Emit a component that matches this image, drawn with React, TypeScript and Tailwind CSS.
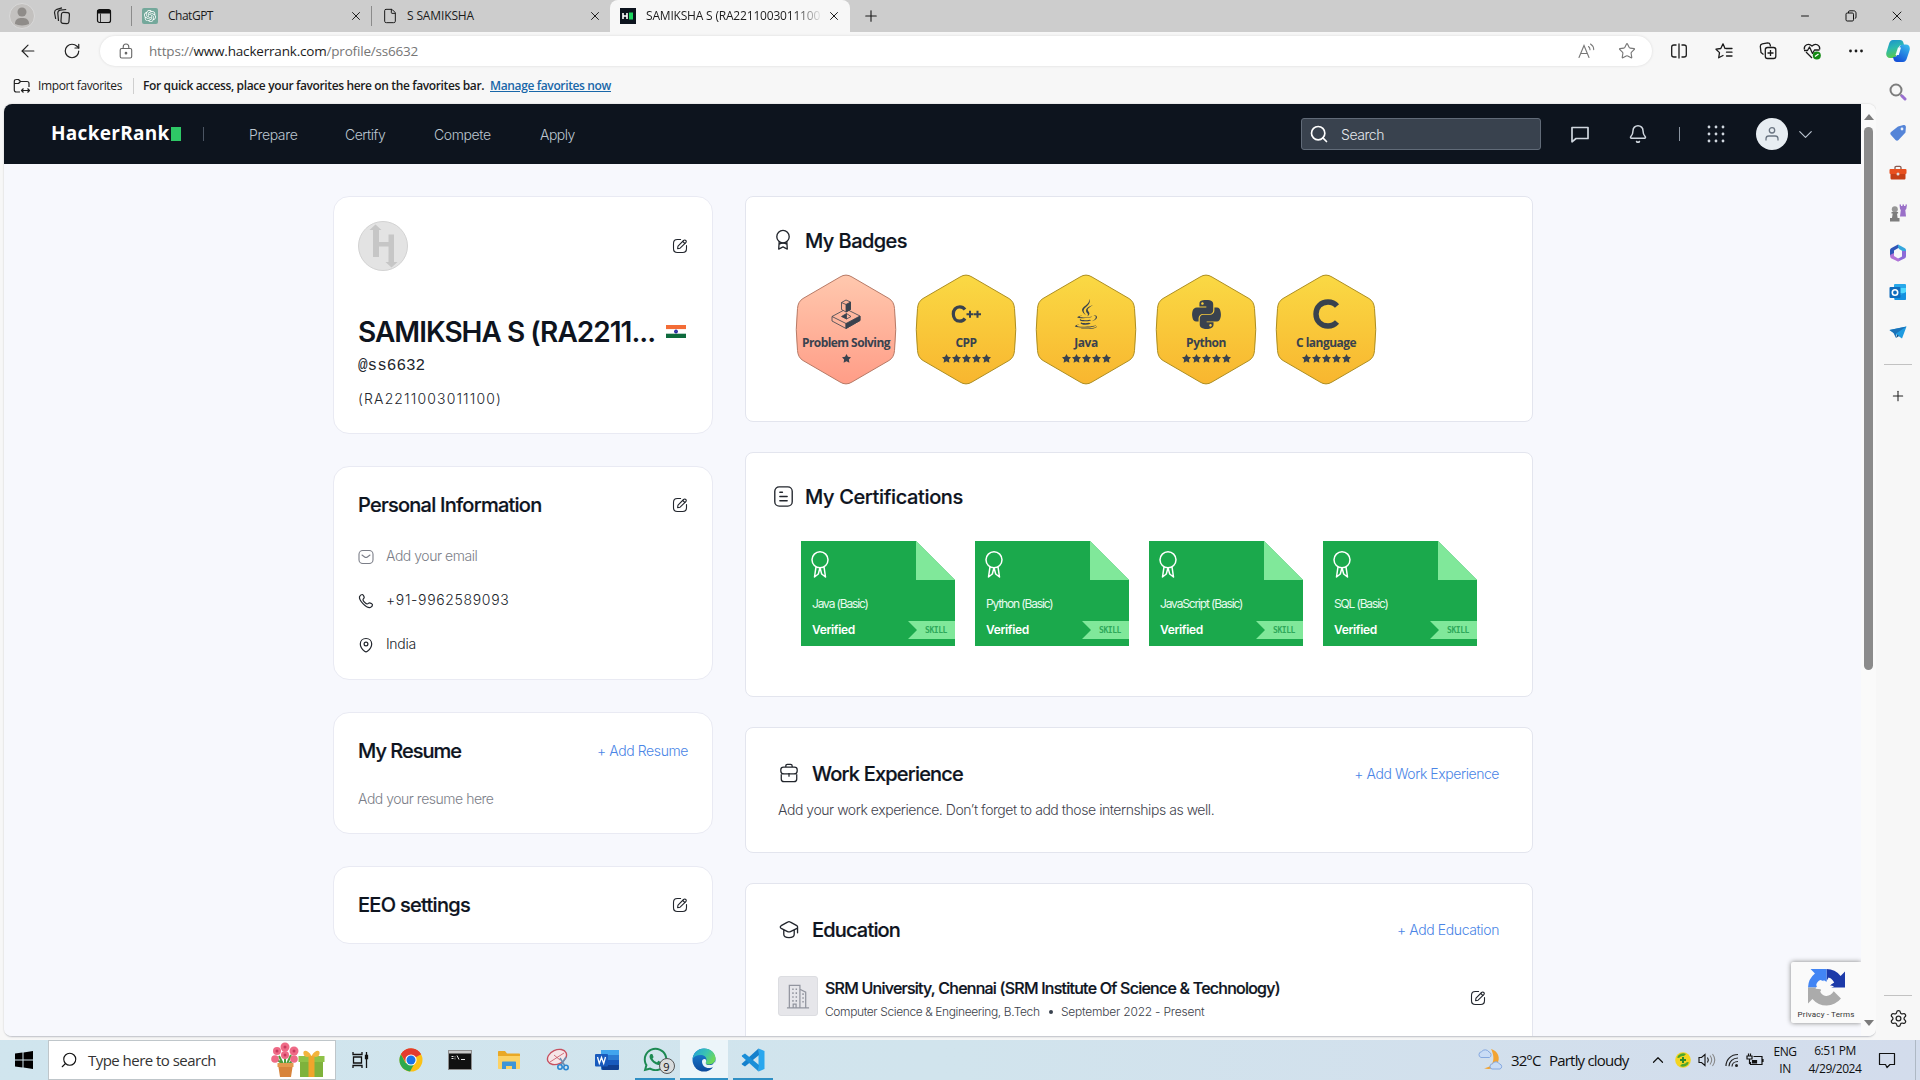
import React from "react";
import {
  ArrowLeft, RotateCw, X, Plus, Minus, File, Search, Bell, ChevronDown, ChevronUp, Star, Settings,
} from "lucide-react";
import { FaPython, FaJava, FaWhatsapp } from "react-icons/fa";
import { SiOpenai } from "react-icons/si";

type P = { className?: string };

/* ---------- shared icons ---------- */

const EditIcon = () => (
  <svg viewBox="0 0 16 16" className="size-4 shrink-0" fill="none" stroke="#22262d" strokeWidth="1.1" strokeLinecap="round" strokeLinejoin="round">
    <path d="M8.6 1.5H5.4C2.6 1.5 1.5 2.6 1.5 5.4v5.2c0 2.8 1.1 3.9 3.9 3.9h5.2c2.8 0 3.9-1.1 3.9-3.9V7.6" />
    <path d="M5.6 10.6 6 8.2l5.6-5.7c.7-.7 1.6-.6 2.2 0 .6.6.7 1.4 0 2.1L8.1 10.2 5.6 10.6Z" />
    <path d="m10.7 3.4 2.1 2.1" />
  </svg>
);

const MedalIcon = ({ className }: P) => (
  <svg viewBox="0 0 18 22" className={className} fill="none" stroke="currentColor" strokeWidth="1.4" strokeLinejoin="round">
    <circle cx="9" cy="8" r="6.5" />
    <path d="M5 13.4 4.5 21 9 18.8l4.5 2.2-.5-7.6M5 15.8c2.5-1.2 5.5-1.2 8 0" />
  </svg>
);

const CertMedal = () => (
  <svg viewBox="0 0 18 27" className="h-[27px] w-[18px]" fill="none" stroke="#fff" strokeWidth="1.5" strokeLinejoin="round">
    <ellipse cx="9" cy="8.8" rx="8" ry="8" />
    <path d="M5 15.8 3.5 26l3.8-3L9 16.8 10.7 23l3.8 3L13 15.8" />
  </svg>
);

/* ---------- browser chrome ---------- */

function TabStrip() {
  return (
    <div className="flex h-8 shrink-0 items-center bg-[#cdcdcd] text-[12px] text-[#1b1b1b]">
      <div className="ml-[9px] grid size-[26px] place-items-center rounded-full border border-[#d9d9d9] bg-[#c3c1bf]">
        <svg viewBox="0 0 20 20" className="size-5"><circle cx="10" cy="6" r="4.5" fill="#8f8c89" /><path d="M3 18c0-5 3-6 7-6s7 1 7 6a9 4 0 0 1-14 0Z" fill="#8f8c89" /></svg>
      </div>
      <svg viewBox="0 0 18 18" className="ml-[18px] size-[18px]" fill="none" stroke="#222" strokeWidth="1.2" strokeLinejoin="round">
        <rect x="8.2" y="5.5" width="8" height="11" rx="2" transform="rotate(4 12 11)" /><path d="M5.5 14 4.8 6c0-1.8.7-2.6 2.400-2.900l6-.6M2.700 12 1.500 5.500C1.500 3.700 2.300 2.900 3.900 2.300L9 .8" />
      </svg>
      <svg viewBox="0 0 16 16" className="ml-[25px] size-4" fill="none" stroke="#111" strokeWidth="1.2"><rect x="1.5" y="1.5" width="13" height="13" rx="2" /><path d="M2 2.500h12v2.500H2Z" fill="#111" /><path d="M4.500 5.500V14" strokeWidth=".8" /></svg>
      <div className="ml-[19px] h-5 w-px bg-[#8b8b8b]" />
      <div className="flex w-[239px] items-center">
        <div className="ml-[10px] grid size-4 place-items-center rounded-[2px] bg-[#74a89b] text-white"><SiOpenai className="size-3" /></div>
        <span className="ml-[10px] tracking-[-0.49px]">ChatGPT</span>
        <X className="ml-auto mr-[8px] size-3.5" strokeWidth={1.7} />
      </div>
      <div className="h-5 w-px bg-[#8b8b8b]" />
      <div className="flex w-[238px] items-center">
        <File className="ml-[10px] size-4" strokeWidth={1.5} />
        <span className="ml-[9px] tracking-[-0.14px]">S SAMIKSHA</span>
        <X className="ml-auto mr-[8px] size-3.5" strokeWidth={1.7} />
      </div>
      <div className="flex h-8 w-[240px] items-center rounded-t-lg bg-[#f7f7f7]">
        <svg viewBox="0 0 16 16" className="ml-[10px] size-4"><rect width="16" height="16" fill="#0d141e" /><path d="M3 5v6M7 5v6M3 8h4" stroke="#fff" strokeWidth="1.6" /><rect x="9" y="4.5" width="4" height="7" fill="#1ed760" /></svg>
        <span className="ml-[10px] w-[174px] overflow-hidden whitespace-nowrap bg-linear-to-r from-[#1b1b1b] from-85% to-[#1b1b1b]/10 bg-clip-text tracking-[-0.19px] text-transparent">SAMIKSHA S (RA2211003011100</span>
        <X className="ml-[7px] size-3.5" strokeWidth={1.7} />
      </div>
      <Plus className="ml-[12px] size-[18px]" strokeWidth={1.5} />
      <div className="ml-auto flex items-center">
        <Minus className="size-3" strokeWidth={2} />
        <svg viewBox="0 0 12 12" className="ml-[34px] size-3" fill="none" stroke="#111" strokeWidth="1"><rect x="1" y="3" width="7.5" height="8" rx="1.2" /><path d="M3.500 3V2c0-.8.4-1.200 1.200-1.200h4c1.300 0 2.300 1 2.300 2.300v4c0 .8-.4 1.400-1.200 1.400" /></svg>
        <X className="ml-[32px] mr-[15px] size-4" strokeWidth={1.5} />
      </div>
    </div>
  );
}

const CopilotIcon = () => (
  <svg viewBox="0 0 24 24" className="size-6">
    <defs>
      <linearGradient id="cpA" x1="0" y1="0" x2=".3" y2="1"><stop offset="0" stopColor="#1a8fd0" /><stop offset=".5" stopColor="#2bb9b0" /><stop offset="1" stopColor="#58c94f" /></linearGradient>
      <linearGradient id="cpB" x1="1" y1="0" x2=".4" y2="1"><stop offset="0" stopColor="#39c3ee" /><stop offset="1" stopColor="#1552d8" /></linearGradient>
    </defs>
    <path d="M7 1h7c2 0 3 1 3.500 3L18 6h-2c-2 0-3 1-3.500 3l-2 7c-.6 2-1.500 3-3.500 3H4c-3 0-4.500-2.500-3.500-6L3 5c.8-2.700 2-4 4-4Z" fill="url(#cpA)" />
    <path d="M17 23h-6c-2 0-3-1-3.500-3L7 18h1c2 0 3-1 3.500-3l2-6.500c.6-2 1.500-3 3.500-3h3c3 0 4.500 2.500 3.500 6L21 19c-.8 2.700-2 4-4 4Z" fill="url(#cpB)" />
    <path d="M12 8.500h3l-2.200 7.500H9.500Z" fill="#f5fbff" />
  </svg>
);

function Toolbar() {
  return (
    <div className="flex h-10 shrink-0 items-center bg-[#f7f7f7] pb-[2px]">
      <ArrowLeft className="ml-[18px] size-5 text-[#222]" strokeWidth={1.4} />
      <RotateCw className="ml-[25px] size-[18px] text-[#222]" strokeWidth={1.6} />
      <div className="ml-[19px] flex h-[30px] w-[1552px] items-center rounded-full bg-white shadow-[0_0_3px_rgba(0,0,0,0.12)]">
        <svg viewBox="0 0 16 16" className="ml-[18px] size-4" fill="none" stroke="#666" strokeWidth="1.1"><rect x="2.2" y="5.5" width="11.5" height="9.5" rx="1.5" /><path d="M5.200 5.500V4C5.200 2 6.300 1 8 1s2.800 1 2.800 3v1.500" /><circle cx="8" cy="10.2" r=".8" fill="#666" /></svg>
        <span className="ml-[15px] text-[13.5px] tracking-[-0.19px] text-[#767676]">https://<span className="text-[#1b1b1b]">www.hackerrank.com</span>/profile/ss6632</span>
        <svg viewBox="0 0 18 16" className="ml-auto mr-[22px] h-4 w-[18px]" fill="none" stroke="#777" strokeWidth="1.1" strokeLinecap="round"><path d="M1 14.500 6 2.500l5 12M2.800 10.500h6.400M10.500 3.500c1 .8 1.500 2 1.500 3.300M12.500 1c2 1.200 3.200 3.200 3.200 5.600" /></svg>
        <Star className="mr-[16px] size-[18px] text-[#777]" strokeWidth={1.5} />
      </div>
      <svg viewBox="0 0 18 16" className="ml-[18px] h-4 w-[18px]" fill="none" stroke="#1b1b1b" strokeWidth="1.3"><path d="M6.500 2H4C2.300 2 1.700 2.600 1.700 4v8c0 1.400.6 2 2.300 2h2.500M11.500 2H14c1.700 0 2.300.6 2.300 2v8c0 1.400-.6 2-2.300 2h-2.500M9 .5v15" /></svg>
      <svg viewBox="0 0 18 18" className="ml-[27px] size-[18px]" fill="none" stroke="#1b1b1b" strokeWidth="1.3" strokeLinejoin="round" strokeLinecap="round"><path d="M10 6.500 8 1.800 5.800 6.500 1 7.200l3.500 3.400-.8 5.200L8 13.500M11 6.500h6M11.500 10.200H17M11.500 14H17" /></svg>
      <svg viewBox="0 0 18 18" className="ml-[26px] size-[18px]" fill="none" stroke="#1b1b1b" strokeWidth="1.3" strokeLinejoin="round"><path d="M4.500 12.500 2 10.500 1.300 4.300c0-1.400.6-2.200 2-2.500l5.400-.9c1.400 0 2.200.5 2.500 1.900l.3 1.700" /><rect x="6.3" y="5.5" width="10.5" height="11" rx="2.2" /><path d="M11.500 8v6M8.500 11h6" /></svg>
      <svg viewBox="0 0 18 18" className="ml-[26px] size-[18px]" fill="none" stroke="#1b1b1b" strokeWidth="1.3" strokeLinejoin="round"><path d="M1.300 7.500C.8 3 5.500.5 9 4c3.500-3.500 8.200-1 7.700 3.500M3 10l6 6" /><path d="M1 8.500h3.500L6.500 5l3 6.500L11.500 8h5" /><circle cx="13.800" cy="13.5" r="4" fill="#138a13" stroke="none" /><path d="m12 14.500 3.500-2.500" stroke="#fff" /></svg>
      <svg viewBox="0 0 18 4" className="ml-[26px] h-1 w-[18px]"><circle cx="3.5" cy="2" r="1.4" fill="#1b1b1b" /><circle cx="9" cy="2" r="1.4" fill="#1b1b1b" /><circle cx="14.5" cy="2" r="1.4" fill="#1b1b1b" /></svg>
      <div className="ml-auto mr-[10px]"><CopilotIcon /></div>
    </div>
  );
}

function FavoritesBar() {
  return (
    <div className="flex h-8 shrink-0 items-center bg-[#f7f7f7] pb-[5px] text-[12px] text-[#1b1b1b]">
      <svg viewBox="0 0 18 16" className="ml-[13px] h-4 w-[18px]" fill="none" stroke="#222" strokeWidth="1.2" strokeLinejoin="round"><path d="M7 14H3.500C2 14 1.300 13.300 1.300 12V3.500c0-1.300.7-2 2.200-2h2L7.500 3.500H14c1.400 0 2 .6 2 2V9M1.500 5.500h4l2-2M8.500 12.500h8M10.500 10.500l-2 2 2 2M14.500 10.500l2 2-2 2" /></svg>
      <span className="ml-[7px] w-[84px] whitespace-nowrap tracking-[-0.37px]">Import favorites</span>
      <div className="ml-[11px] h-4 w-px bg-[#cfcfcf]" />
      <span className="ml-[9px] w-[341px] whitespace-nowrap font-semibold tracking-[-0.37px]">For quick access, place your favorites here on the favorites bar.</span>
      <span className="ml-[6px] whitespace-nowrap font-semibold tracking-[-0.36px] text-[#1967a9] underline">Manage favorites now</span>
    </div>
  );
}

const cell = "grid h-10 w-full place-items-center";

function EdgeSidebar() {
  return (
    <div className="flex w-11 shrink-0 flex-col items-center bg-[#f7f7f7]">
      <div className={cell}><svg viewBox="0 0 18 18" className="size-[18px]" fill="none"><circle cx="7" cy="7" r="5.5" stroke="#7d7d7d" strokeWidth="2" /><path d="m11.500 11.500 2 2" stroke="#8a8290" strokeWidth="2" /><path d="m13 13 3 3" stroke="#9a6fd0" strokeWidth="3" strokeLinecap="round" /></svg></div>
      <div className={cell}><svg viewBox="0 0 18 18" className="mt-px size-[18px]"><path d="M9 2.500 14.500 1c1.500 0 2.300.6 2.400 2l-.4 5.500L9.500 16c-1 1-2 1-3 0L2 11c-.9-1-.9-2 0-3Z" fill="#5585d8" /><circle cx="13" cy="5" r="1.4" fill="#e9f0fb" /></svg></div>
      <div className={cell}><svg viewBox="0 0 18 18" className="mt-[2px] size-[18px]"><path d="M6 5V3.500C6 2.700 6.400 2.300 7.200 2.300h3.600c.8 0 1.200.4 1.200 1.200V5" fill="none" stroke="#8a5a50" strokeWidth="1.3" /><rect x=".5" y="5" width="17" height="5" rx="1" fill="#e8501f" /><path d="M1.500 10h15v4c0 1-.5 1.500-1.500 1.500H3c-1 0-1.500-.5-1.500-1.500Z" fill="#c53f16" /><circle cx="9" cy="10" r="1.5" fill="#ddd" /></svg></div>
      <div className={cell}><svg viewBox="0 0 18 18" className="mt-px size-[18px]"><path d="M10.500.5H12v1.500h1.500V.5H15v1.500h1.500V.5H18l-.7 4.500-1 1 .7 6.500h-6l.8-6.500-.8-1Z" fill="#9a70c8" /><circle cx="5.800" cy="5.2" r="3" fill="#969696" /><path d="M2.500 8h6.600v1.500H8l.6 4.500h1.900v3.500H1V14h2l.7-4.500H2.500Z" fill="#7d7d7d" /></svg></div>
      <div className={cell}><svg viewBox="0 0 18 18" className="mt-px size-[18px]"><path d="M9 .5 2.500 4C1.500 4.600 1 5.500 1 6.500V12l4-2V6.500L11 3Z" fill="#2f55b8" /><path d="m9 .5 6.500 3.500c1 .6 1.500 1.500 1.500 2.500V9L10 5 9 3Z" fill="#35a7dd" /><path d="M17 7v5c0 1-.5 1.900-1.500 2.500L9 17.500l-2-1.700 6-3.300V7Z" fill="#8b6bd8" /><path d="M1 11c0 2 .5 3 1.500 3.500L9 17.500l2.500-1.500L5 12V9Z" fill="#b273d6" /></svg></div>
      <div className={cell}><svg viewBox="0 0 18 18" className="size-[18px]"><rect x="5" y="1" width="12" height="15" rx="1" fill="#28a8ea" /><path d="M11 5h6v5h-6Z" fill="#50d9ff" /><path d="M5 16 17 9v7c0 .6-.4 1-1 1H6Z" fill="#1490df" /><rect x=".5" y="4" width="11" height="11" rx="1" fill="#0f6cbd" /><circle cx="6" cy="9.5" r="2.7" fill="none" stroke="#fff" strokeWidth="1.6" /></svg></div>
      <div className={cell}><svg viewBox="0 0 18 18" className="size-[18px]"><path d="m.5 7 17-3.500-4.500 12-5-3.500Z" fill="#1f9be0" /><path d="m.5 7 17-3.500L7 10.500V15L4.500 10Z" fill="#1b72b8" /><path d="m7 15 3-2-2-1.500Z" fill="#0d4f88" /></svg></div>
      <div className="mt-[12px] h-px w-7 bg-[#c2c2c2]" />
      <Plus className="mt-[23px] size-4 text-[#222]" strokeWidth={1.6} />
      <div className="mt-auto h-px w-7 bg-[#c2c2c2]" />
      <Settings className="mb-[12px] mt-[13px] size-[19px] text-[#222]" strokeWidth={1.6} />
    </div>
  );
}

/* ---------- site header ---------- */

function SiteHeader() {
  return (
    <header className="flex h-[60px] shrink-0 items-center bg-[#0d141e] text-[14px] text-[#bcc6d1]">
      <div className="ml-[47px] flex w-[152px] items-center">
        <span className="mt-[-2px] w-[120px] font-[Open_Sans] text-[19px] font-bold leading-none tracking-[0.3px] text-white">HackerRank</span>
        <span className="h-[14px] w-[10px] bg-[#2ec866]" />
      </div>
      <div className="h-[14px] w-px bg-[#4b5563]" />
      <nav className="ml-[45px] flex">
        <span className="w-[96px] tracking-[-0.35px]">Prepare</span>
        <span className="w-[89px] tracking-[-0.48px]">Certify</span>
        <span className="w-[106px] tracking-[-0.38px]">Compete</span>
        <span className="tracking-[-0.55px]">Apply</span>
      </nav>
      <div className="ml-auto flex h-8 w-[240px] items-center rounded-[3px] border border-[#616b78] bg-[#39424e]">
        <Search className="ml-[7px] size-5 text-white" strokeWidth={2} />
        <span className="ml-[12px] tracking-[-0.45px] text-[#e3e7ec]">Search</span>
      </div>
      <div className="grid w-[78px] place-items-center">
        <svg viewBox="0 0 20 20" className="size-5" fill="none" stroke="#cfd6de" strokeWidth="1.7" strokeLinejoin="round"><path d="M2 3.500h16v11H6L2 17.800Z" /></svg>
      </div>
      <div className="grid w-[38px] place-items-center"><Bell className="size-5 text-[#cfd6de]" strokeWidth={1.8} /></div>
      <div className="grid w-[45px] place-items-center"><div className="h-[14px] w-px bg-[#8b95a1]" /></div>
      <svg viewBox="0 0 18 18" className="mx-[5px] size-[18px]" fill="#cfd6de">
        {[2, 9, 16].map((y) => [2, 9, 16].map((x) => <circle key={`${x}-${y}`} cx={x} cy={y} r="1.4" />))}
      </svg>
      <div className="ml-[26px] grid size-8 place-items-center rounded-full bg-[#e7edf2]">
        <svg viewBox="0 0 16 16" className="size-4" fill="none" stroke="#6b7683" strokeWidth="1.3"><circle cx="8" cy="4.3" r="2.7" /><path d="M2 14.500v-1.700C2 11 3 10 4.800 10h6.400c1.800 0 2.800 1 2.800 2.800v1.700" /></svg>
      </div>
      <ChevronDown className="ml-[6px] mr-[44px] size-[23px] text-[#bcc6d1]" strokeWidth={1.2} />
    </header>
  );
}

/* ---------- left column ---------- */

const leftCard = "flex w-[380px] flex-col rounded-2xl border border-[#e9eaf3] bg-white pl-[24px] pr-[24px]";
const h2 = "text-[20px] font-medium leading-6 text-[#0e141e] [-webkit-text-stroke:0.2px_#0e141e]";
const link = "text-[14px] leading-5 text-[#4a85e6]";

function ProfileCard() {
  return (
    <section className={`${leftCard} h-[238px]`}>
      <div className="mt-[24px] flex h-[50px] items-center justify-between">
        <svg viewBox="0 0 50 50" className="size-[50px]"><circle cx="25" cy="25" r="24.5" fill="#e3e3e3" stroke="#d2d2d2" /><path d="M11.500 9 17.500 3.500 23.500 9H21v12h9.500v-7.500H36V41h3.500l-6 5.500-6-5.500h3V25.500H21V36h-6V9Z" fill="#c6c6c6" /></svg>
        <EditIcon />
      </div>
      <div className="mt-[43px] flex h-[36px] items-center justify-between">
        <h1 className="whitespace-nowrap text-[28px] font-semibold leading-9 tracking-[-0.98px] text-[#0e141e]">SAMIKSHA S (RA2211...</h1>
        <svg viewBox="0 0 20 13" className="mb-[1px] mr-[2px] h-[13px] w-5"><rect width="20" height="4.300" fill="#f36c36" /><rect y="4.300" width="20" height="4.400" fill="#fff" /><rect y="8.700" width="20" height="4.300" fill="#0e6b3d" /><circle cx="10" cy="6.500" r="1.5" fill="#3c3fa8" stroke="#1a1a9c" /></svg>
      </div>
      <p className="mt-[4px] font-[Liberation_Mono] text-[16px] font-normal leading-6 text-[#22262d]">@ss6632</p>
      <p className="mt-[11px] text-[14px] leading-5 tracking-[1.15px] text-[#22262d]">(RA2211003011100)</p>
    </section>
  );
}

function PersonalCard() {
  return (
    <section className={`${leftCard} h-[214px]`}>
      <div className="mt-[26px] flex h-6 items-center justify-between"><h2 className={`${h2} tracking-[-0.75px]`}>Personal Information</h2><EditIcon /></div>
      <div className="mt-[28px] flex h-5 items-center text-[14px] text-[#7b7e88]">
        <svg viewBox="0 0 16 16" className="mt-[4px] size-4" fill="none" stroke="currentColor" strokeWidth="1.1" strokeLinecap="round"><rect x="1" y="1.5" width="14" height="13" rx="3.8" /><path d="m4 6 2.600 2c.9.700 1.900.7 2.800 0L12 6" /></svg>
        <span className="ml-[12px] tracking-[-0.46px]">Add your email</span>
      </div>
      <div className="mt-[24px] flex h-5 items-center text-[14px] text-[#22262d]">
        <svg viewBox="0 0 16 16" className="mt-[4px] size-4" fill="none" stroke="currentColor" strokeWidth="1.2" strokeLinejoin="round"><path d="M1.500 3.700C2 2.400 3 1.500 4.200 1.500c.8 0 2 2 2 3 0 1-1.200 1.300-1.200 2.200 0 1.300 3 4.300 4.300 4.300.9 0 1.200-1.200 2.200-1.200s3 1.200 3 2c0 1.200-.9 2.200-2.200 2.700C8.500 15.300 0.700 7.500 1.500 3.700Z" /></svg>
        <span className="ml-[12px] tracking-[0.66px]">+91-9962589093</span>
      </div>
      <div className="mt-[24px] flex h-5 items-center text-[14px] text-[#22262d]">
        <svg viewBox="0 0 16 16" className="mt-[4px] size-4" fill="none" stroke="currentColor" strokeWidth="1.2"><path d="M8 1.500c3.500 0 5.700 2.500 5.700 5.600 0 2.900-2 5.500-4.300 7.200-.9.600-1.900.6-2.800 0C4.300 12.600 2.300 10 2.300 7.100 2.300 4 4.500 1.500 8 1.500Z" /><circle cx="8" cy="7" r="1.9" /></svg>
        <span className="ml-[12px] tracking-[-0.3px]">India</span>
      </div>
    </section>
  );
}

function ResumeCard() {
  return (
    <section className={`${leftCard} h-[122px]`}>
      <div className="mt-[26px] flex h-6 items-center justify-between"><h2 className={`${h2} tracking-[-1px]`}>My Resume</h2><span className={`${link} tracking-[-0.4px]`}>+ Add Resume</span></div>
      <p className="mt-[26px] text-[14px] leading-5 tracking-[-0.48px] text-[#7b7e88]">Add your resume here</p>
    </section>
  );
}

function EeoCard() {
  return (
    <section className={`${leftCard} h-[78px]`}>
      <div className="mt-[26px] flex h-6 items-center justify-between"><h2 className={`${h2} tracking-[-0.72px]`}>EEO settings</h2><EditIcon /></div>
    </section>
  );
}

/* ---------- right column ---------- */

const rightCard = "flex w-[788px] flex-col rounded-lg border border-[#e3e5ee] bg-white";
const STAR = "M4 0 5.300 2.500 8 2.900 6.100 4.900l.5 2.900L4 6.500 1.400 7.800l.5-2.900L0 2.900l2.700-.4Z";

function Badge({ name, stars, bronze, children, track }: { name: string; stars: number; bronze?: boolean; children: React.ReactNode; track: string }) {
  const id = bronze ? "bronze" : "gold";
  return (
    <div className="relative h-[111px] w-[102px]">
      <svg viewBox="-1 -.5 102 111" className="absolute inset-0 h-full w-full">
        <defs>
          <linearGradient id="gold" x1="0" y1="0" x2="0" y2="1"><stop offset="0" stopColor="#fad944" /><stop offset="1" stopColor="#f8b62f" /></linearGradient>
          <linearGradient id="bronze" x1="0" y1="0" x2="0" y2="1"><stop offset="0" stopColor="#ffc8ae" /><stop offset="1" stopColor="#ff9d87" /></linearGradient>
        </defs>
        <path d="M44 2.500Q50-1.300 56 2.500L93 24Q98 27 98.500 34Q101 55 98.500 76Q98 83 93 86L56 107.500Q50 111.300 44 107.500L7 86Q2 83 1.500 76Q-1 55 1.500 34Q2 27 7 24Z" fill={`url(#${id})`} stroke={bronze ? "#b77a66" : "#ad8e22"} strokeWidth="1" />
      </svg>
      <div className="relative flex h-full flex-col items-center text-[#39424e]">
        <div className="mt-[23px] grid h-[34px] place-items-center">{children}</div>
        <span className={`mt-[3px] whitespace-nowrap font-[Open_Sans] text-[12px] font-bold leading-[18px] ${track}`}>{name}</span>
        <div className="mt-[2px] flex gap-px">
          {Array.from({ length: stars }, (_, i) => <svg key={i} viewBox="0 0 8 8" className="size-[9px]" fill="#39424e"><path d={STAR} /></svg>)}
        </div>
      </div>
    </div>
  );
}

function BadgesCard() {
  return (
    <section className={`${rightCard} h-[226px]`}>
      <div className="ml-[28px] mt-[32px] flex h-6 items-center">
        <MedalIcon className="mb-[4px] h-[21px] w-[18px] text-[#22262d]" />
        <h2 className={`${h2} ml-[13px] tracking-[-0.55px]`}>My Badges</h2>
      </div>
      <div className="ml-[49px] mt-[21px] flex gap-[18px]">
        <Badge name="Problem Solving" stars={1} bronze track="tracking-[-0.57px]">
          <svg viewBox="0 0 30 30" className="size-[30px]" fill="none" stroke="#39424e" strokeWidth=".8" strokeLinejoin="round"><path d="M1 17.500 15 10l14 7v4.500L15 29.500 1 22Z" /><path d="M15 24.500 29 17v4.500L15 29.500Z" fill="#39424e" /><path d="M1 17.500 15 24.500V29" /><path d="M10.500 3.500 15 1l4.500 2v7.500L15 13l-4.500-2.500Z" fill="#ffb69c" /><path d="M10.500 3.500 15 5.500" /><path d="M15 5.500 19.500 3v7.500L15 13Z" fill="#39424e" /><path d="m10.500 17.500 5-3v5.500Z" fill="#39424e" /><path d="m15.500 14.500 4.500 3-4.500 2.500" /></svg>
        </Badge>
        <Badge name="CPP" stars={5} track="tracking-[-0.5px]">
          <svg viewBox="0 0 30 20" className="h-5 w-[30px]" fill="none" stroke="#39424e"><path d="M14 5.500C12.700 3.700 11 2.800 8.800 2.800 4.800 2.800 2.300 5.800 2.300 10s2.500 7.200 6.500 7.200c2.200 0 4-.9 5.200-2.700" strokeWidth="3.2" /><path d="M15.500 10.200h7M19 6.700v7M23 10.200H30M26.500 6.700v7" strokeWidth="2" /></svg>
        </Badge>
        <Badge name="Java" stars={5} track="tracking-[-0.5px]"><FaJava className="h-[30px] w-[26px]" /></Badge>
        <Badge name="Python" stars={5} track="tracking-[-0.5px]"><FaPython className="size-[33px]" /></Badge>
        <Badge name="C language" stars={5} track="tracking-[-0.53px]">
          <svg viewBox="0 0 28 30" className="h-[30px] w-[28px]" fill="none" stroke="#39424e" strokeWidth="5.400"><path d="M25 7c-2.300-2.700-5.300-4-9-4C9 3 4 8 4 15s5 12 12 12c3.700 0 6.700-1.300 9-4" /></svg>
        </Badge>
      </div>
    </section>
  );
}

function Certificate({ name }: { name: string }) {
  return (
    <div className="flex h-[105px] w-[154px] flex-col bg-[#1ba94c]">
      <div className="flex h-[39px] justify-between">
        <div className="ml-[10px] mt-[10px]"><CertMedal /></div>
        <svg viewBox="0 0 39 39" className="size-[39px]"><path d="M0 0H39V39Z" fill="#fff" /><path d="M0 0 39 39H0Z" fill="#80e89a" /></svg>
      </div>
      <span className="ml-[11px] mt-[16px] text-[12px] font-normal leading-4 tracking-[-1.15px] text-[#e8fbee]">{name}</span>
      <div className="mt-[8px] flex h-[20px] items-center justify-between">
        <span className="ml-[11px] text-[12px] font-semibold leading-4 tracking-[-0.33px] text-white">Verified</span>
        <div className="flex h-[18px] w-[47px] items-center bg-[#80e89a] [clip-path:polygon(0_0,100%_0,100%_100%,0_100%,9px_50%)]">
          <span className="ml-[17px] mt-[2px] font-[DejaVu_Sans_Mono] text-[8px] font-bold leading-none tracking-[-0.42px] text-[#2fa95a]">SKILL</span>
        </div>
      </div>
    </div>
  );
}

function CertificationsCard() {
  return (
    <section className={`${rightCard} h-[245px]`}>
      <div className="ml-[28px] mt-[31px] flex h-6 items-center">
        <svg viewBox="0 0 18 20" className="h-[21px] w-[19px]" fill="none" stroke="#22262d" strokeWidth="1.3" strokeLinecap="round"><rect x=".7" y=".8" width="16.600" height="18.400" rx="4.2" /><path d="M5.500 6H8M5.500 10h7M5.500 14h7" /></svg>
        <h2 className={`${h2} ml-[12px] mt-[2px] tracking-[-0.36px]`}>My Certifications</h2>
      </div>
      <div className="ml-[55px] mt-[33px] flex gap-5">
        {["Java (Basic)", "Python (Basic)", "JavaScript (Basic)", "SQL (Basic)"].map((n) => <Certificate key={n} name={n} />)}
      </div>
    </section>
  );
}

function WorkCard() {
  return (
    <section className={`${rightCard} h-[126px] pl-[32px] pr-[33px]`}>
      <div className="mt-[34px] flex h-6 items-center">
        <svg viewBox="0 0 22 22" className="mb-[2px] h-5 w-[22px]" fill="none" stroke="#22262d" strokeWidth="1.4" strokeLinejoin="round"><path d="M7.500 4.500V3.200C7.500 2 8 1.500 9.200 1.500h3.600c1.200 0 1.700.5 1.700 1.700v1.300" /><path d="M5 4.500h12c2 0 3 1 3 2.800v1.400c0 2-1.500 3.300-3.500 3.300h-11C3.500 12 2 10.700 2 8.700V7.300C2 5.500 3 4.500 5 4.500ZM2.500 12.500v5c0 2 1 3 3 3h11c2 0 3-1 3-3v-5M11 11v4" /></svg>
        <h2 className={`${h2} ml-[12px] tracking-[-0.81px]`}>Work Experience</h2>
        <span className={`${link} ml-auto tracking-[-0.44px]`}>+ Add Work Experience</span>
      </div>
      <p className="mt-[14px] whitespace-nowrap text-[14px] leading-5 tracking-[-0.45px] text-[#3f434d]">Add your work experience. Don’t forget to add those internships as well.</p>
    </section>
  );
}

function EducationCard() {
  return (
    <section className={`${rightCard} h-[200px] pl-[32px] pr-[33px]`}>
      <div className="mt-[34px] flex h-6 items-center">
        <svg viewBox="0 0 22 20" className="mb-[2px] h-[19px] w-[22px]" fill="none" stroke="#22262d" strokeWidth="1.4" strokeLinejoin="round" strokeLinecap="round"><path d="M9.500 2.200 2.800 6c-1.300.8-1.300 2 0 2.800l6.700 3.400c1 .5 2 .5 3 0L20 8.500V7c0-.5-.3-.8-.8-1L12.500 2.200c-1-.6-2-.6-3 0ZM5.500 10.500V15c0 2 2 3.500 5.500 3.500s5.500-1.500 5.500-3.500v-4.500M20 8.500v5" /></svg>
        <h2 className={`${h2} ml-[12px] tracking-[-0.83px]`}>Education</h2>
        <span className={`${link} ml-auto tracking-[-0.39px]`}>+ Add Education</span>
      </div>
      <div className="mt-[34px] flex h-10 items-center">
        <div className="grid size-10 place-items-center rounded-[3px] border border-[#dcdde1] bg-[#e6e6ea]">
          <svg viewBox="0 0 24 26" className="h-[25px] w-[24px]" fill="none" stroke="#92959f" strokeWidth="1.3"><path d="M3 24.500V1.500h11v23M14 5.500l6 3v16M0.500 24.700h23M7 24.500V21h3v3.500" /><path d="M6 5.500h1.500M9.500 5.500H11M6 9.500h1.500M9.500 9.500H11M6 13.500h1.500M9.500 13.500H11M6 17.500h1.500M9.500 17.500H11M16.500 10.500H18M16.500 14.500H18M16.500 18.500H18" strokeWidth="1.7" /></svg>
        </div>
        <div className="ml-[7px] mt-[4px] flex flex-col">
          <span className="whitespace-nowrap text-[16px] font-medium leading-6 tracking-[-0.76px] text-[#0e141e] [-webkit-text-stroke:0.2px_#0e141e]">SRM University, Chennai (SRM Institute Of Science &amp; Technology)</span>
          <span className="mt-[4px] flex items-center whitespace-nowrap text-[12px] leading-4 text-[#3a3e48]">
            <span className="w-[216px] tracking-[-0.39px]">Computer Science &amp; Engineering, B.Tech</span>
            <span className="mx-[8px] size-[4px] rounded-full bg-[#39424e]" />
            <span className="tracking-[-0.22px]">September 2022 - Present</span>
          </span>
        </div>
        <div className="ml-auto mr-[13px] mt-[4px]"><EditIcon /></div>
      </div>
    </section>
  );
}

function Recaptcha() {
  return (
    <div className="absolute bottom-[13px] right-0 flex h-[61px] w-[70px] flex-col items-center rounded-l-[2px] bg-[#fafafa] shadow-[0_0_5px_#808080] [clip-path:inset(-6px_0_-6px_-6px)]">
      <svg viewBox="0 0 64 64" className="mt-[7px] size-[37px]">
        <path d="M64 31.900V4.300l-7.600 7.600A32 32 0 0 0 32 0v21.400l3.500-6.700c3 .9 5.600 2.500 7.500 5l2.300 3.700-13.300 8.500Z" fill="#1c3aa9" />
        <path d="M32 0H4.400L12 7.600A32 32 0 0 0 0 32h23l-9-3.500c1-5 3.500-8 7.500-9.500l6 2L32 32Z" fill="#4285f4" />
        <path d="M0 32v27.600L7.600 52A32 32 0 0 0 57 51l-12.500-12.500C41 44 36 47 31 46.500c-5-.5-8-3-10-7.500l8-7Z" fill="#ababab" />
        <path d="m17 27 9 1 1-9 6 4 5-7 4 8-4 4 7 2-7 4v8l-8-5-7 5-1-7-9-1Z" fill="#fafafa" />
      </svg>
      <span className="mt-[3px] whitespace-nowrap font-[Roboto] text-[8px] font-normal leading-[12px] tracking-[0.17px] text-[#333]">Privacy - Terms</span>
    </div>
  );
}

function Scrollbar() {
  return (
    <div className="flex w-[15px] shrink-0 flex-col items-center bg-[#fafafa]">
      <svg viewBox="0 0 10 6" className="mt-[10px] h-[6px] w-[10px]" fill="#7b7b7b"><path d="M5 0 10 6H0Z" /></svg>
      <div className="mt-[7px] h-[543px] w-[9px] rounded-full bg-[#8b8b8b]" />
      <svg viewBox="0 0 10 6" className="mb-[10px] mt-auto h-[6px] w-[10px]" fill="#7b7b7b"><path d="M0 0H10L5 6Z" /></svg>
    </div>
  );
}

/* ---------- taskbar ---------- */

function Taskbar() {
  return (
    <footer className="flex h-10 shrink-0 items-center bg-linear-to-r from-[#d0e5ee] via-[#d1e4ed] to-[#d3dcec] text-[12px] text-[#111]">
      <svg viewBox="0 0 18 18" className="ml-[15px] size-[18px]"><path d="M0 2.600 7.500 1.500v7H0ZM8.500 1.400 18 0v8.500H8.500ZM0 9.500h7.500v7L0 15.400ZM8.500 9.500H18V18l-9.500-1.400Z" /></svg>
      <div className="ml-[15px] flex h-10 w-[288px] items-center border border-[#bfc6ca] bg-white">
        <Search className="ml-[11px] size-[18px] -scale-x-100" strokeWidth={1.5} />
        <span className="ml-[10px] text-[15px] tracking-[-0.53px] text-[#333]">Type here to search</span>
        <svg viewBox="0 0 54 36" className="ml-auto mr-[10px] h-9 w-[54px]">
          <path d="M14 12v12M8 14l5 10M20 13l-5 11M5 17l7 5M23 17l-6 6" stroke="#4d9b3a" strokeWidth="2" />
          <g fill="#ee6a86"><circle cx="14" cy="5" r="4.5" /><circle cx="6" cy="9" r="4" /><circle cx="23" cy="9" r="4.5" /><circle cx="14" cy="13" r="4" /><circle cx="4" cy="17" r="3.8" /><circle cx="23" cy="17" r="3.8" /></g>
          <g fill="#c83a5e"><circle cx="14" cy="5" r="1.5" /><circle cx="6" cy="9" r="1.5" /><circle cx="23" cy="9" r="1.5" /><circle cx="14" cy="13" r="1.5" /></g>
          <path d="M7 22h15l-2 13H9Z" fill="#d8843c" /><path d="M6.500 21h16v4h-16Z" fill="#e49a4e" />
          <rect x="29" y="18" width="23" height="17" fill="#7fb23c" /><rect x="27.5" y="14" width="26" height="6" fill="#8fc248" /><rect x="37.5" y="14" width="6" height="21" fill="#f0a52c" /><path d="M40.500 14c-4-7-9-6-8-2s5 3 8 2Zm0 0c4-7 9-6 8-2s-5 3-8 2Z" fill="#f3b43c" />
        </svg>
      </div>
      <div className="grid w-[48px] place-items-center"><svg viewBox="0 0 18 18" className="size-[18px]" fill="none" stroke="#111" strokeWidth="1.3"><path d="M2 1v2.500h9V1M2 17v-2.500h9V17M2.500 6h8v6h-8ZM15.500 1v3M15.500 8v9" /><path d="M14.500 4.500h2v3h-2Z" fill="#111" /></svg></div>
      <div className="ml-[2px] grid w-[49px] place-items-center">
        <svg viewBox="0 0 24 24" className="size-6"><circle cx="12" cy="12" r="11.5" fill="#fbc116" /><path d="M12 12 2 6.200A11.500 11.500 0 0 1 22 6.200Z" fill="#e33b2e" /><path d="M2 6.200A11.500 11.500 0 0 0 11 23.500l5-9-9.500.5Z" fill="#2da94f" /><path d="M12 6.500H22a11.500 11.500 0 0 0-20-.3l5 8.300Z" fill="#e33b2e" /><circle cx="12" cy="12" r="5.6" fill="#fff" /><circle cx="12" cy="12" r="4.5" fill="#1a73e8" /></svg>
      </div>
      <div className="grid w-[49px] place-items-center"><svg viewBox="0 0 24 20" className="h-5 w-6"><rect x=".5" y=".5" width="23" height="19" fill="#111" stroke="#8e8e8e" /><rect x="1" y="1" width="22" height="2.5" fill="#c9c9c9" /><path d="M3.500 6.500h2M3.500 8.500h2M7 6.500v.8M7 8.500v.8M9 5.500l2 4M13 9.500h4" stroke="#fff" strokeWidth=".9" /></svg></div>
      <div className="grid w-[49px] place-items-center"><svg viewBox="0 0 24 20" className="h-5 w-6"><path d="M1 2c0-.6.4-1 1-1h6l2 2.500h12c.6 0 1 .4 1 1V18H1Z" fill="#e9a825" /><path d="M1 6h22v12c0 .6-.4 1-1 1H2c-.6 0-1-.4-1-1Z" fill="#fcd265" /><path d="M5 12.500c0-.6.4-1 1-1h12c.6 0 1 .4 1 1V19h-4v-3H9v3H5Z" fill="#3e95d8" /></svg></div>
      <div className="grid w-[49px] place-items-center"><svg viewBox="0 0 24 24" className="size-6" fill="none"><ellipse cx="11" cy="9" rx="10" ry="7" transform="rotate(-25 11 9)" fill="#f6e6e8" stroke="#c65060" strokeWidth="1.4" /><path d="m4 14 14-9M8 7l6 5" stroke="#c65060" strokeWidth=".8" /><path d="m14 10 5 8M20 9l-5 8" stroke="#6e8fb0" strokeWidth="1.5" /><circle cx="14" cy="19" r="2.2" stroke="#2a86d1" strokeWidth="1.6" /><circle cx="20" cy="19.5" r="2.2" stroke="#2a86d1" strokeWidth="1.6" /></svg></div>
      <div className="grid w-[49px] place-items-center"><svg viewBox="0 0 24 22" className="h-[22px] w-6"><rect x="6" y="1" width="18" height="20" rx="1.5" fill="#2b7cd3" /><path d="M6 1h18v5H6Z" fill="#41a5ee" /><path d="M6 11h18v5H6Z" fill="#185abd" /><path d="M6 16h18v3.500c0 .8-.7 1.500-1.500 1.500h-15Z" fill="#103f91" /><rect y="5" width="13" height="12.5" rx="1" fill="#185abd" /><path d="m2.500 8 1.800 6.500L6.500 8.500l2.200 6L10.500 8" fill="none" stroke="#fff" strokeWidth="1.3" /></svg></div>
      <div className="ml-[4px] flex h-10 w-[40px] flex-col items-center border-b-2 border-[#2f8fc4] pt-[6px]">
        <div className="relative"><FaWhatsapp className="size-[27px] text-[#1d8a53]" />
          <span className="absolute -right-[6px] top-[12px] grid size-4 place-items-center rounded-full border border-[#555] bg-[#d9dcdd] text-[11px] leading-none">9</span></div>
      </div>
      <div className="ml-[5px] flex h-10 w-[48px] justify-center border-b-2 border-[#2f8fc4] bg-[#ecf5f9] pt-[8px]">
        <svg viewBox="0 0 24 24" className="size-6">
          <defs><linearGradient id="edA" x1="0" y1="0" x2="1" y2=".5"><stop offset="0" stopColor="#1f9fdc" /><stop offset=".6" stopColor="#3cc4b0" /><stop offset="1" stopColor="#6bd85a" /></linearGradient><linearGradient id="edB" x1="0" y1="0" x2="0" y2="1"><stop offset="0" stopColor="#1c86d8" /><stop offset="1" stopColor="#0d4a9c" /></linearGradient></defs>
          <circle cx="12" cy="12" r="11.5" fill="url(#edB)" />
          <path d="M.6 11C1.500 4.500 6.500.5 12 .5c7 0 11.500 4.800 11.500 9.800 0 4-3 6.200-6.200 6.200-2.800 0-3.800-1-3.800-1.800 0-.7 1-1.200 1-3C14.500 9 12 7 8.500 7 5 7 2 8.500.6 11Z" fill="url(#edA)" />
          <path d="M10 13.500c0 4 3.500 7 8 6.500 1.500-.2 3-.8 3.800-1.300l1.700 2.300V13l-3 3.500c-2 .8-5 .8-6.200-.3-1-.9-.3-1.700-.1-3.200.1-1.200-.6-2-1.700-2-1.500 0-2.500 1-2.500 2.500Z" fill="#ecf5f9" />
        </svg>
      </div>
      <div className="ml-[5px] flex h-10 w-[40px] justify-center border-b-2 border-[#2f8fc4] pt-[8px]">
        <svg viewBox="0 0 24 24" className="size-6"><path d="M17.500.5 23.500 3v18l-6 2.500Z" fill="#2aa7ee" /><path d="M17.500.5 18 7 4 18.500.8 16.500 1 15.500Z" fill="#1580cc" /><path d="M17.500 23.500 18 17 4 5.500.8 7.500 1 8.500Z" fill="#1a8fd8" /></svg>
      </div>

      <svg viewBox="0 0 26 24" className="ml-auto h-6 w-[26px]"><path d="M14 1c7 2 10 9 6 15-3 5-9 6-13 4 9 0 12-9 7-19Z" fill="#f3a433" /><path d="M4 9.500a3 3 0 0 1 .5-5.800A4.500 4.500 0 0 1 12 4a3 3 0 0 1 .5 5.500Z" fill="#c9dcf5" stroke="#86a9e0" /><path d="M15 21a2.700 2.700 0 0 1 .5-5.300 4 4 0 0 1 7 .3 2.600 2.600 0 0 1 .5 5Z" fill="#c9dcf5" stroke="#86a9e0" /></svg>
      <span className="ml-[8px] w-[38px] whitespace-nowrap text-[15px] tracking-[-0.9px]">32°C</span>
      <span className="w-[79px] whitespace-nowrap text-[15px] tracking-[-0.8px]">Partly cloudy</span>
      <ChevronUp className="ml-[21px] size-[18px]" strokeWidth={1.6} />
      <svg viewBox="0 0 16 16" className="ml-[8px] size-4"><circle cx="8" cy="8" r="7.8" fill="#f4d421" /><path d="M2 5.500a6.500 6.500 0 0 1 9-3.500L9 4a5 5 0 0 0-5 2Zm12 5a6.500 6.500 0 0 1-9 3.500l2-2a5 5 0 0 0 5-2Z" fill="#4fa72d" /><path d="M8 5v6M5 8h6" stroke="#2b8a2b" strokeWidth="2" /></svg>
      <svg viewBox="0 0 18 16" className="ml-[7px] h-4 w-[18px]" fill="none" stroke="#111" strokeWidth="1.1"><path d="M1 5.500h2.500L7 2.500v11L3.500 10.500H1Z" /><path d="M9.500 5.500c1 1.500 1 3.500 0 5" /><path d="M12 3.500c2 2.700 2 6.300 0 9M14.500 2c2.700 3.600 2.700 8.400 0 12" stroke="#888" /></svg>
      <svg viewBox="0 0 16 16" className="ml-[8px] size-4" fill="none" stroke="#222" strokeWidth="1.2"><path d="M2 14C2 7.500 7 2.500 14 2.500M5 14.300C5 9.500 9 6 14 6M8 14.500c0-3 2.500-5 6-5" /><circle cx="12.5" cy="13.5" r="1.5" fill="#222" stroke="none" /></svg>
      <svg viewBox="0 0 18 16" className="ml-[6px] h-4 w-[18px]" fill="none" stroke="#111" strokeWidth="1.2"><path d="M7.500 4.500H16v8H4.500V10M17 7v3M1 4h5v3H1ZM2.500 1.500V4M4.500 1.500V4M3.500 7v5" /><path d="M6.500 8.500h4V11h-4Z" fill="#111" /></svg>
      <div className="ml-[9px] w-[24px] text-center leading-[17px] tracking-[-0.48px]">ENG<br />IN</div>
      <div className="ml-[11px] w-[54px] whitespace-nowrap text-center leading-[18px] tracking-[-0.45px]">6:51 PM<br />4/29/2024</div>
      <svg viewBox="0 0 18 18" className="ml-[16px] size-[18px]" fill="none" stroke="#111" strokeWidth="1.2" strokeLinejoin="round"><path d="M1.500 2.500h15v11H12L9 16.500 7.500 13.500h-6Z" /></svg>
      <div className="ml-[19px] mr-[4px] h-10 w-px bg-[#aeb8c4]" />
    </footer>
  );
}

/* ---------- page ---------- */

export default function App() {
  return (
    <div className="flex h-[1080px] w-[1920px] flex-col overflow-hidden bg-[#f7f7f7] font-['Open_Sans',sans-serif]">
      <TabStrip />
      <Toolbar />
      <div className="flex min-h-0 flex-1">
        <div className="flex w-[1876px] flex-col">
          <FavoritesBar />
          <div className="mb-[3px] ml-[4px] flex min-h-0 flex-1 overflow-hidden rounded-lg border-b border-[#c9cbd1] font-['Inter',sans-serif] font-light shadow-[0_0_2px_rgba(0,0,0,0.2)]">
            <div className="relative flex w-[1857px] shrink-0 flex-col overflow-hidden bg-[#f7f8fd]">
              <SiteHeader />
              <main className="ml-[329px] mt-[32px] flex min-h-0 flex-1 items-start gap-[32px]">
                <div className="flex flex-col gap-8">
                  <ProfileCard />
                  <PersonalCard />
                  <ResumeCard />
                  <EeoCard />
                </div>
                <div className="flex flex-col gap-[30px]">
                  <BadgesCard />
                  <CertificationsCard />
                  <WorkCard />
                  <EducationCard />
                </div>
              </main>
              <Recaptcha />
            </div>
            <Scrollbar />
          </div>
        </div>
        <EdgeSidebar />
      </div>
      <Taskbar />
    </div>
  );
}
